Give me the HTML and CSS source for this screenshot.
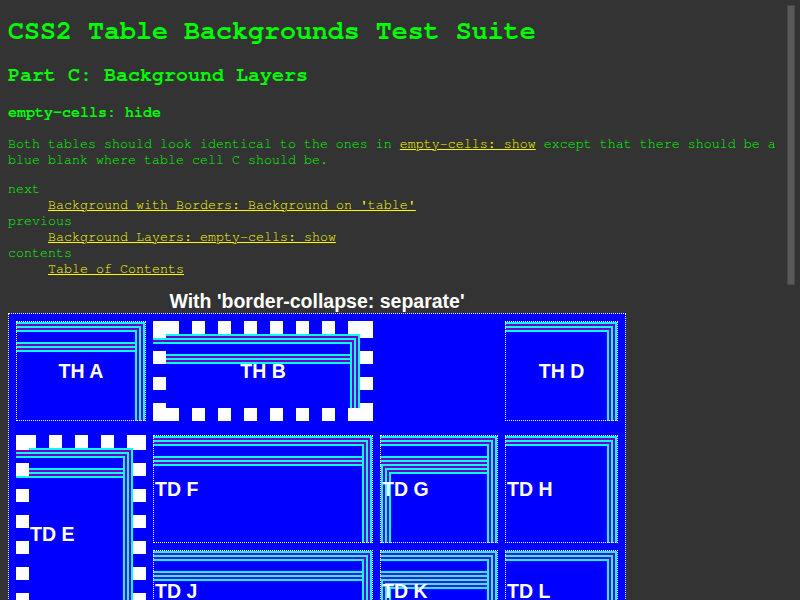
FILE: index.html
```html
<!DOCTYPE html>
<html lang="en">
<head>
<meta charset="utf-8">
<title>CSS2 Table Backgrounds Test Suite</title>
<link rel="stylesheet" href="styles.css">
</head>
<body>
<div class="page">
  <h1>CSS2 Table Backgrounds Test Suite</h1>
  <h2>Part C: Background Layers</h2>
  <h3>empty-cells: hide</h3>
  <p>Both tables should look identical to the ones in <a href="#">empty-cells: show</a> except that there should be a blue blank where table cell C should be.</p>
  <dl>
    <dt>next</dt>
    <dd><a href="#">Background with Borders: Background on 'table'</a></dd>
    <dt>previous</dt>
    <dd><a href="#">Background Layers: empty-cells: show</a></dd>
    <dt>contents</dt>
    <dd><a href="#">Table of Contents</a></dd>
  </dl>
  <div class="figure">
    <div class="caption">With 'border-collapse: separate'</div>
    <div class="grid">
      <div class="cell th pq ca">TH A</div>
      <div class="cell th thick spq cb">TH B</div>
      <div class="cell th p cd">TH D</div>
      <div class="cell thick spq ce">TD E</div>
      <div class="cell pq cf">TD F</div>
      <div class="cell pqr cg">TD G</div>
      <div class="cell p ch">TD H</div>
      <div class="cell pq cj">TD J</div>
      <div class="cell pqr ck">TD K</div>
      <div class="cell p cl">TD L</div>
    </div>
  </div>
</div>
<div class="scrollbar" aria-hidden="true"><div class="thumb"></div></div>
</body>
</html>
```

FILE: styles.css
```css
html, body {
  background: #333;
}

body {
  margin: 0 8px 8px;
  color: #00ff00;
  font-family: "Nimbus Mono PS", "Nimbus Mono L", "FreeMono", "Courier", "Liberation Mono", monospace;
}

.page {
  min-height: 1238px;
  padding-right: 15px;
}

h1 {
  font-size: 26.67px;
  line-height: 29.5px;
  margin: 17.4px 0;
}

h2 {
  font-size: 20px;
  line-height: 22.7px;
  margin: 0.83em 0;
}

h3 {
  font-size: 15px;
  line-height: 17px;
  margin: 1em 0;
}

p, dl {
  font-size: 13.333px;
  line-height: 16px;
  margin: 1em 0;
}

dd {
  margin-left: 40px;
}

a {
  color: #ffff00;
  text-decoration: underline;
}

.figure {
  width: 618px;
}

.caption {
  font-family: "Liberation Sans", Arial, sans-serif;
  font-weight: bold;
  font-size: 19.5px;
  line-height: 23px;
  color: #fff;
  text-align: center;
}

.grid {
  display: grid;
  grid-template-columns: 130px 220px 118px 113px;
  grid-template-rows: 100px 0 108px 83px;
  gap: 7px;
  padding: 7px;
  border: 1px dotted #fff;
  background: #0000ff;
  width: max-content;
}

.cell {
  --b: 1px;
  --C: #00ffff;
  --V: #7400c8;
  --hx: 13px;
  --vy: 4px;
  --stripes: linear-gradient(to bottom, var(--C) 0 2px, var(--V) 2px 4px, var(--C) 4px 6px, var(--V) 6px 8px, var(--C) 8px 10px);

  --P-img:
    linear-gradient(var(--C), var(--C)),
    linear-gradient(var(--V), var(--V)),
    linear-gradient(var(--C), var(--C)),
    linear-gradient(var(--V), var(--V)),
    linear-gradient(var(--C), var(--C)),
    var(--stripes);
  --P-pos:
    right var(--b) top var(--b),
    right calc(var(--b) + 2px) top calc(var(--b) + 2px),
    right calc(var(--b) + 4px) top calc(var(--b) + 4px),
    right calc(var(--b) + 6px) top calc(var(--b) + 6px),
    right calc(var(--b) + 8px) top calc(var(--b) + 8px),
    left 0 top var(--b);
  --P-size:
    2px calc(100% - var(--b)),
    2px calc(100% - var(--b) - 2px),
    2px calc(100% - var(--b) - 4px),
    2px calc(100% - var(--b) - 6px),
    2px calc(100% - var(--b) - 8px),
    calc(100% - var(--b)) 10px;

  --Q-img: var(--stripes);
  --Q-pos: left 0 top calc(var(--b) + 20px);
  --Q-size: calc(100% - var(--b)) 10px;

  --R-img:
    linear-gradient(var(--C), var(--C)),
    linear-gradient(var(--V), var(--V)),
    linear-gradient(var(--C), var(--C)),
    linear-gradient(var(--V), var(--V)),
    linear-gradient(var(--C), var(--C)),
    var(--stripes);
  --R-pos:
    left var(--b) top calc(var(--b) + 28px),
    left calc(var(--b) + 2px) top calc(var(--b) + 30px),
    left calc(var(--b) + 4px) top calc(var(--b) + 32px),
    left calc(var(--b) + 6px) top calc(var(--b) + 34px),
    left calc(var(--b) + 8px) top calc(var(--b) + 36px),
    left var(--b) top calc(var(--b) + 28px);
  --R-size:
    2px calc(100% - var(--b) - 28px),
    2px calc(100% - var(--b) - 30px),
    2px calc(100% - var(--b) - 32px),
    2px calc(100% - var(--b) - 34px),
    2px calc(100% - var(--b) - 36px),
    calc(100% - 2 * var(--b)) 10px;

  --S-img:
    linear-gradient(#fff, #fff),
    linear-gradient(#fff, #fff),
    linear-gradient(#fff, #fff),
    linear-gradient(#fff, #fff),
    repeating-linear-gradient(to right, transparent 0 var(--hx), #fff var(--hx) calc(var(--hx) + 13px), transparent calc(var(--hx) + 13px) 26px),
    repeating-linear-gradient(to right, transparent 0 var(--hx), #fff var(--hx) calc(var(--hx) + 13px), transparent calc(var(--hx) + 13px) 26px),
    repeating-linear-gradient(to bottom, transparent 0 var(--vy), #fff var(--vy) calc(var(--vy) + 13px), transparent calc(var(--vy) + 13px) 26px),
    repeating-linear-gradient(to bottom, transparent 0 var(--vy), #fff var(--vy) calc(var(--vy) + 13px), transparent calc(var(--vy) + 13px) 26px);
  --S-pos:
    left top, right top, left bottom, right bottom,
    left top, left bottom, left top, right top;
  --S-size:
    13px 13px, 13px 13px, 13px 13px, 13px 13px,
    100% 13px, 100% 13px, 13px 100%, 13px 100%;

  display: flex;
  align-items: center;
  padding: 1px;
  border: var(--b) dotted #fff;
  font-family: "Liberation Sans", Arial, sans-serif;
  font-weight: bold;
  font-size: 19.5px;
  color: #fff;
  white-space: nowrap;
  background-repeat: no-repeat;
  background-origin: border-box;
  background-clip: border-box;
}

.th {
  justify-content: center;
}

.thick {
  --b: 13px;
  border-style: solid;
  border-color: transparent;
}

.p {
  background-image: var(--P-img);
  background-position: var(--P-pos);
  background-size: var(--P-size);
}

.pq {
  background-image: var(--P-img), var(--Q-img);
  background-position: var(--P-pos), var(--Q-pos);
  background-size: var(--P-size), var(--Q-size);
}

.pqr {
  background-image: var(--P-img), var(--R-img), var(--Q-img);
  background-position: var(--P-pos), var(--R-pos), var(--Q-pos);
  background-size: var(--P-size), var(--R-size), var(--Q-size);
}

.spq {
  background-image: var(--S-img), var(--P-img), var(--Q-img);
  background-position: var(--S-pos), var(--P-pos), var(--Q-pos);
  background-size: var(--S-size), var(--P-size), var(--Q-size);
}

.ca { grid-area: 1 / 1; }
.cb { grid-area: 1 / 2; --hx: 13px; --vy: 4px; }
.cd { grid-area: 1 / 4; }
.ce { grid-area: 3 / 1 / 5 / 2; --hx: 7px; --vy: 2px; }
.cf { grid-area: 3 / 2; }
.cg { grid-area: 3 / 3; }
.ch { grid-area: 3 / 4; }
.cj { grid-area: 4 / 2; }
.ck { grid-area: 4 / 3; }
.cl { grid-area: 4 / 4; }

.scrollbar {
  position: fixed;
  top: 0;
  right: 0;
  width: 15px;
  height: 100%;
  background: #333;
}

.thumb {
  margin: 5px 5px 0 2px;
  height: 280px;
  box-sizing: border-box;
  background: #595959;
  border: 1px solid #474747;
}
```
